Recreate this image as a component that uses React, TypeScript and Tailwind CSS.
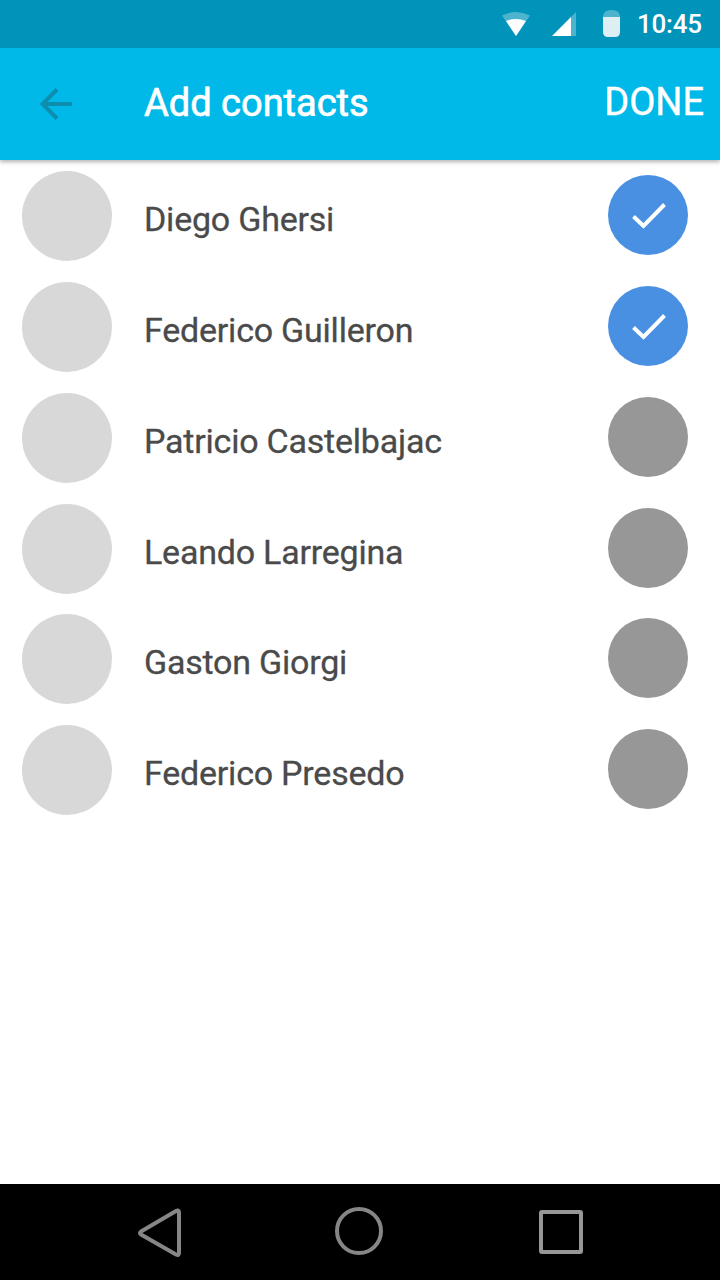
const contacts = [
  { name: "Diego Ghersi", selected: true },
  { name: "Federico Guilleron", selected: true },
  { name: "Patricio Castelbajac", selected: false },
  { name: "Leando Larregina", selected: false },
  { name: "Gaston Giorgi", selected: false },
  { name: "Federico Presedo", selected: false },
];

function StatusBar() {
  return (
    <div className="z-20 flex h-12 shrink-0 bg-[#0094ba]">
      <svg className="ml-[500px] h-12 w-[130px] shrink-0" viewBox="500 0 130 48">
        <path d="M502 15.500Q516 8.500 530 15.500L516 36Z" fill="#fff" fillOpacity=".3" />
        <path d="M506 21Q516 17 526 21L516 36Z" fill="#fff" />
        <path d="M576 12V36H571V17Z" fill="#fff" fillOpacity=".3" />
        <path d="M571 17V36H552Z" fill="#fff" />
        <path d="M603 17Q603 10 611.500 10Q620 10 620 17Z" fill="#fff" fillOpacity=".3" />
        <path d="M603 17H620V32Q620 37 615 37H608Q603 37 603 32Z" fill="#deeff3" />
      </svg>
      <span className="ml-[7px] mt-[8px] whitespace-nowrap text-[26px] font-medium leading-8 tracking-[-0.25px] text-white">10:45</span>
    </div>
  );
}

export default function App() {
  return (
    <div className="flex h-[1280px] w-[720px] flex-col overflow-hidden bg-white font-['Roboto',sans-serif]">
      <StatusBar />
      <header className="z-10 flex h-28 shrink-0 items-center bg-[#00b9e8] text-white shadow-[0_2px_4px_rgba(0,0,0,0.3)]">
        <svg className="ml-10 h-8 w-8" viewBox="0 0 32 32" fill="none" stroke="#0d8eaf" strokeWidth="4">
          <path d="M32 16H3M17 1.500L2.500 16L17 30.500" />
        </svg>
        <h1 className="-mt-[2px] ml-[72px] text-[38px] font-normal leading-[44px] [-webkit-text-stroke:0.7px_white]">Add contacts</h1>
        <button className="-mt-[4px] ml-auto mr-4 text-[38px] leading-[44px] [-webkit-text-stroke:0.4px_white]">DONE</button>
      </header>
      <main className="flex-1 pt-[11px]">
        {contacts.map((c) => (
          <div key={c.name} className="flex h-[110.85px] items-start pl-[22px] pr-8">
            <div className="size-[90px] rounded-full bg-[#d8d8d8]" />
            <span className="ml-8 mt-[28px] text-[34px] leading-10 tracking-[-0.22px] text-[#4a4a4a] [-webkit-text-stroke:0.3px_#4a4a4a]">{c.name}</span>
            <div className={"ml-auto mt-1 size-20 rounded-full " + (c.selected ? "bg-[#4990e2]" : "bg-[#979797]")}>
              {c.selected && (
                <svg className="size-20" viewBox="0 0 80 80" fill="none" stroke="#fff" strokeWidth="4">
                  <path d="M25.500 41.500L35.500 51L56.500 29.500" />
                </svg>
              )}
            </div>
          </div>
        ))}
      </main>
      <nav className="h-24 shrink-0 bg-black">
        <svg className="h-24 w-full" viewBox="0 0 720 96" fill="none" stroke="#868686" strokeWidth="4" strokeLinejoin="round">
          <path d="M179 28.500V69Q179 72 176 70.500L141 50.500Q139 49 141 47.500L176 27Q179 25.500 179 28.500Z" />
          <circle cx="359" cy="47" r="22" />
          <rect x="541" y="28" width="40" height="40" rx="1" stroke="#979797" />
        </svg>
      </nav>
    </div>
  );
}
